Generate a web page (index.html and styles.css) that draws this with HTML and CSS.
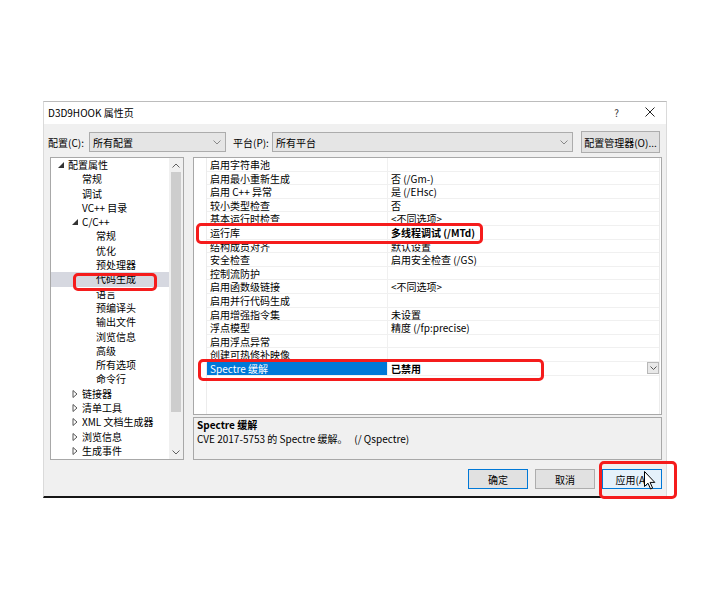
FILE: index.html
```html
<!DOCTYPE html>
<html lang="zh-CN">
<head>
    <meta charset="UTF-8">
    <title>D3D9HOOK 属性页</title>
    <link rel="stylesheet" href="styles.css">
</head>
<body>
<div class="page">
    <div class="dialog">
        <!-- Barra de título -->
        <div class="titlebar">
            <span class="title">D3D9HOOK 属性页</span>
            <span class="tb-btn help">?</span>
            <span class="tb-btn close">
                <svg width="10" height="10" viewBox="0 0 10 10"><path d="M0.5 0.5 L9.5 9.5 M9.5 0.5 L0.5 9.5" stroke="#222" stroke-width="1"/></svg>
            </span>
        </div>

        <div class="body">
            <!-- Configuración / plataforma -->
            <div class="config-row">
                <span class="lbl lbl-config">配置(C):</span>
                <div class="combo combo-config">所有配置
                    <svg class="chev" width="8" height="5" viewBox="0 0 8 5"><path d="M0.5 0.5 L4 4 L7.5 0.5" fill="none" stroke="#888"/></svg>
                </div>
                <span class="lbl lbl-platform">平台(P):</span>
                <div class="combo combo-platform">所有平台
                    <svg class="chev" width="8" height="5" viewBox="0 0 8 5"><path d="M0.5 0.5 L4 4 L7.5 0.5" fill="none" stroke="#888"/></svg>
                </div>
                <div class="btn btn-mgr">配置管理器(O)...</div>
            </div>

            <div class="main">
                <!-- Árbol de propiedades -->
                <div class="tree">
                    <ul class="tree-list">
                        <li class="lv0"><span class="arrow"><svg width="6" height="6" viewBox="0 0 6 6"><polygon points="6,0 6,6 0,6" fill="#333"/></svg></span>配置属性</li>
                        <li class="lv1">常规</li>
                        <li class="lv1">调试</li>
                        <li class="lv1">VC++ 目录</li>
                        <li class="lv1"><span class="arrow"><svg width="6" height="6" viewBox="0 0 6 6"><polygon points="6,0 6,6 0,6" fill="#333"/></svg></span>C/C++</li>
                        <li class="lv2">常规</li>
                        <li class="lv2">优化</li>
                        <li class="lv2">预处理器</li>
                        <li class="lv2 selected">代码生成</li>
                        <li class="lv2">语言</li>
                        <li class="lv2">预编译头</li>
                        <li class="lv2">输出文件</li>
                        <li class="lv2">浏览信息</li>
                        <li class="lv2">高级</li>
                        <li class="lv2">所有选项</li>
                        <li class="lv2">命令行</li>
                        <li class="lv1"><span class="arrow"><svg width="6" height="8" viewBox="0 0 6 8"><polygon points="1,0.5 5,4 1,7.5" fill="none" stroke="#555"/></svg></span>链接器</li>
                        <li class="lv1"><span class="arrow"><svg width="6" height="8" viewBox="0 0 6 8"><polygon points="1,0.5 5,4 1,7.5" fill="none" stroke="#555"/></svg></span>清单工具</li>
                        <li class="lv1"><span class="arrow"><svg width="6" height="8" viewBox="0 0 6 8"><polygon points="1,0.5 5,4 1,7.5" fill="none" stroke="#555"/></svg></span>XML 文档生成器</li>
                        <li class="lv1"><span class="arrow"><svg width="6" height="8" viewBox="0 0 6 8"><polygon points="1,0.5 5,4 1,7.5" fill="none" stroke="#555"/></svg></span>浏览信息</li>
                        <li class="lv1"><span class="arrow"><svg width="6" height="8" viewBox="0 0 6 8"><polygon points="1,0.5 5,4 1,7.5" fill="none" stroke="#555"/></svg></span>生成事件</li>
                    </ul>
                    <div class="vscroll">
                        <div class="sb-arrow"><svg width="8" height="5" viewBox="0 0 8 5"><path d="M0.5 4.5 L4 1 L7.5 4.5" fill="none" stroke="#606060"/></svg></div>
                        <div class="sb-track"><div class="sb-thumb"></div></div>
                        <div class="sb-arrow"><svg width="8" height="5" viewBox="0 0 8 5"><path d="M0.5 0.5 L4 4 L7.5 0.5" fill="none" stroke="#606060"/></svg></div>
                    </div>
                </div>

                <div class="right">
                    <!-- Rejilla de propiedades -->
                    <div class="grid">
                        <div class="gutter"></div>
                        <div class="rows">
                            <div class="row"><span class="name">启用字符串池</span><span class="value"></span></div>
                            <div class="row"><span class="name">启用最小重新生成</span><span class="value">否 (/Gm-)</span></div>
                            <div class="row"><span class="name">启用 C++ 异常</span><span class="value">是 (/EHsc)</span></div>
                            <div class="row"><span class="name">较小类型检查</span><span class="value">否</span></div>
                            <div class="row"><span class="name">基本运行时检查</span><span class="value">&lt;不同选项&gt;</span></div>
                            <div class="row"><span class="name">运行库</span><span class="value bold">多线程调试 (/MTd)</span></div>
                            <div class="row"><span class="name">结构成员对齐</span><span class="value">默认设置</span></div>
                            <div class="row"><span class="name">安全检查</span><span class="value">启用安全检查 (/GS)</span></div>
                            <div class="row"><span class="name">控制流防护</span><span class="value"></span></div>
                            <div class="row"><span class="name">启用函数级链接</span><span class="value">&lt;不同选项&gt;</span></div>
                            <div class="row"><span class="name">启用并行代码生成</span><span class="value"></span></div>
                            <div class="row"><span class="name">启用增强指令集</span><span class="value">未设置</span></div>
                            <div class="row"><span class="name">浮点模型</span><span class="value">精度 (/fp:precise)</span></div>
                            <div class="row"><span class="name">启用浮点异常</span><span class="value"></span></div>
                            <div class="row"><span class="name">创建可热修补映像</span><span class="value"></span></div>
                            <div class="row active"><span class="name">Spectre 缓解</span><span class="value bold">已禁用</span>
                                <span class="dd"><svg width="7" height="4" viewBox="0 0 7 4"><path d="M0.5 0.5 L3.5 3.5 L6.5 0.5" fill="none" stroke="#555"/></svg></span>
                            </div>
                        </div>
                    </div>
                    <!-- Descripción -->
                    <div class="desc">
                        <div class="desc-title">Spectre 缓解</div>
                        <div>CVE 2017-5753 的 Spectre 缓解。&nbsp;&nbsp;&nbsp;(/ Qspectre)</div>
                    </div>
                </div>
            </div>

            <!-- Botones -->
            <div class="footer">
                <div class="btn btn-ok">确定</div>
                <div class="btn">取消</div>
                <div class="btn btn-apply">应用(A)</div>
            </div>
        </div>
    </div>

    <!-- Marcas rojas -->
    <div class="mark mark-tree"></div>
    <div class="mark mark-runtime"></div>
    <div class="mark mark-spectre"></div>
    <div class="mark mark-apply"></div>

    <!-- Cursor -->
    <svg class="cursor" width="12" height="19" viewBox="0 0 12 19"><path d="M0.5 0.5 L0.5 15.5 L4 12.2 L6.6 18 L8.6 17.1 L6.1 11.4 L10.8 11.4 Z" fill="#fff" stroke="#000" stroke-width="1"/></svg>
</div>
</body>
</html>
```

FILE: styles.css
```css
/* Global */
body {
    margin: 0;
    background: #fff;
    font-family: "Noto Sans CJK SC", "Noto Sans", sans-serif;
    font-size: 10px;
    color: #000;
}

.page {
    position: relative;
    width: 710px;
    height: 599px;
    overflow: hidden;
}

/* Diálogo */
.dialog {
    margin: 101px 0 0 43px;
    width: 622px;
    background: #f0f0f0;
    border-top: 1px solid #bcbcbc;
    border-left: 1px solid #dadada;
    border-right: 1px solid #dadada;
    border-bottom: 2px solid #161616;
}

.titlebar {
    height: 22px;
    box-sizing: border-box;
    background: #fff;
    display: flex;
    align-items: center;
    padding: 0 0 2px 4px;
}

.title {
    flex: 1;
}

.tb-btn {
    width: 33px;
    display: flex;
    justify-content: center;
    align-items: center;
    color: #333;
}

.help {
    font-size: 10px;
}

.body {
    padding: 7px 4px 0 6px;
}

/* Fila de configuración */
.config-row {
    display: flex;
    align-items: center;
    height: 22px;
    margin-left: -2px;
}

.lbl-config {
    width: 41px;
}

.lbl-platform {
    width: 39px;
    margin-left: 7px;
}

.combo {
    height: 20px;
    box-sizing: border-box;
    background: #e5e5e5;
    border: 1px solid #acacac;
    padding-left: 3px;
    display: flex;
    align-items: center;
    justify-content: space-between;
    padding-right: 4px;
}

.combo-config {
    width: 137px;
}

.combo-platform {
    width: 301px;
}

.btn {
    height: 20px;
    width: 60px;
    box-sizing: border-box;
    background: #e1e1e1;
    border: 1px solid #adadad;
    display: flex;
    align-items: center;
    justify-content: center;
}

.btn-mgr {
    width: 79px;
    height: 22px;
    margin-left: 8px;
}

/* Zona principal */
.main {
    display: flex;
    gap: 9px;
    margin-top: 4px;
    height: 303px;
}

/* Árbol */
.tree {
    width: 134px;
    box-sizing: border-box;
    border: 1px solid #a8a8a8;
    background: #fff;
    display: flex;
}

.tree-list {
    flex: 1;
    list-style: none;
    margin: 0;
    padding: 0;
}

.tree-list li {
    height: 14.3px;
    line-height: 14.3px;
    white-space: nowrap;
}

.lv0 { padding-left: 17px; }
.lv1 { padding-left: 31px; }
.lv2 { padding-left: 45px; }

.tree-list li.selected {
    background: #d6d8e0;
}

.arrow {
    display: inline-flex;
    align-items: center;
    width: 7px;
    height: 14px;
    vertical-align: top;
    margin-left: -10px;
    margin-right: 3px;
}

.vscroll {
    width: 14px;
    background: #f0f0f0;
    display: flex;
    flex-direction: column;
}

.sb-arrow {
    height: 14px;
    display: flex;
    align-items: center;
    justify-content: center;
}

.sb-track {
    flex: 1;
    padding: 0 2px;
}

.sb-thumb {
    height: 240px;
    background: #cdcdcd;
}

/* Columna derecha */
.right {
    width: 469px;
    display: flex;
    flex-direction: column;
}

.grid {
    height: 258px;
    box-sizing: border-box;
    border: 1px solid #a8a8a8;
    background: #fff;
    display: flex;
}

.gutter {
    width: 12px;
    border-right: 1px solid #ececec;
}

.rows {
    flex: 1;
    border-right: 1px solid #ececec;
    margin-right: 1px;
}

.row {
    height: 13.6px;
    line-height: 13px;
    box-sizing: border-box;
    border-bottom: 1px solid #f0f0f0;
    display: flex;
    white-space: nowrap;
}

.name {
    width: 177px;
    padding-left: 3px;
    border-right: 1px solid #f0f0f0;
}

.value {
    flex: 1;
    padding-left: 3px;
}

.bold {
    font-weight: bold;
}

.row.active .name {
    background: #0078d7;
    color: #fff;
}

.dd {
    width: 12px;
    height: 12px;
    box-sizing: border-box;
    background: #e8e8e8;
    border: 1px solid #b8b8b8;
    display: flex;
    align-items: center;
    justify-content: center;
    align-self: center;
}

/* Descripción */
.desc {
    margin-top: 2px;
    height: 43px;
    box-sizing: border-box;
    border: 1px solid #a8a8a8;
    padding: 0 3px;
    line-height: 14px;
}

.desc-title {
    font-weight: bold;
}

/* Botones inferiores */
.footer {
    display: flex;
    justify-content: flex-end;
    gap: 7px;
    padding: 9px 0 7px;
}

.btn-ok {
    border-color: #0078d7;
}

.btn-apply {
    background: #e5f1fb;
    border-color: #0078d7;
}

/* Marcas rojas */
.mark {
    position: absolute;
    box-sizing: border-box;
    border: 3px solid #f51c1c;
    border-radius: 5px;
}

.mark-tree {
    left: 73px;
    top: 273px;
    width: 84px;
    height: 18px;
}

.mark-runtime {
    left: 196px;
    top: 223px;
    width: 287px;
    height: 21px;
}

.mark-spectre {
    left: 198px;
    top: 359px;
    width: 346px;
    height: 22px;
}

.mark-apply {
    left: 599px;
    top: 461px;
    width: 78px;
    height: 38px;
}

.cursor {
    position: absolute;
    left: 644px;
    top: 471px;
}
```
